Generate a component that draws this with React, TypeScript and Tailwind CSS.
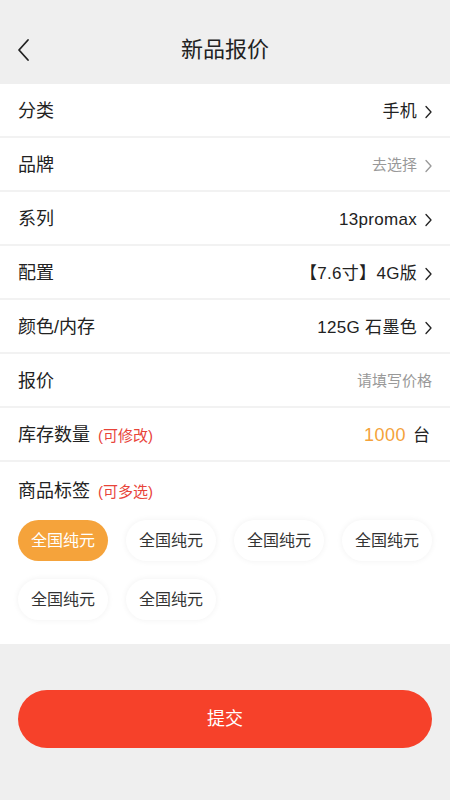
import React, { useState } from 'react';

const FONT = { fontFamily: '"Liberation Sans", "Noto Sans CJK SC", sans-serif' };

const Chevron = ({ className = '' }: { className?: string }) => (
  <svg width="7" height="14" viewBox="0 0 7 14" fill="none" className={className}>
    <path d="M1 1.5L6 7L1 12.5" stroke="currentColor" strokeWidth="1.3" strokeLinecap="round" strokeLinejoin="round" />
  </svg>
);

type Row = { label: string; value: string; muted?: boolean; arrow?: boolean };

const rows: Row[] = [
  { label: '分类', value: '手机', arrow: true },
  { label: '品牌', value: '去选择', muted: true, arrow: true },
  { label: '系列', value: '13promax', arrow: true },
  { label: '配置', value: '【7.6寸】4G版', arrow: true },
  { label: '颜色/内存', value: '125G 石墨色', arrow: true },
  { label: '报价', value: '请填写价格', muted: true },
];

export default function App() {
  const [selected, setSelected] = useState<number[]>([0]);
  const tags = Array.from({ length: 6 }, () => '全国纯元');

  const toggle = (i: number) =>
    setSelected((s) => (s.includes(i) ? s.filter((x) => x !== i) : [...s, i]));

  return (
    <div className="w-[450px] h-[800px] bg-[#efefef] flex flex-col text-[#222]" style={FONT}>
      {/* header */}
      <div className="h-[84px] flex items-end pb-[19px] relative shrink-0">
        <button className="absolute left-[16px] bottom-[22px] text-[#222]">
          <svg width="16" height="24" viewBox="0 0 16 24" fill="none">
            <path d="M12 2L3 12L12 22" stroke="currentColor" strokeWidth="1.8" strokeLinecap="round" strokeLinejoin="round" />
          </svg>
        </button>
        <div className="w-full text-center text-[22px] leading-[30px]">新品报价</div>
      </div>

      {/* list */}
      <div className="bg-white">
        {rows.map((r) => (
          <div key={r.label} className="h-[54px] pt-[3px] px-[18px] flex items-center justify-between border-b-2 border-[#f2f2f2]">
            <span className="text-[18px]">{r.label}</span>
            <span className="flex items-center gap-[8px]">
              <span className={r.muted ? 'text-[15px] text-[#999]' : 'text-[17px] tracking-[0.3px] text-[#222]'}>{r.value}</span>
              {r.arrow && <Chevron className={r.muted ? 'text-[#999]' : 'text-[#222]'} />}
            </span>
          </div>
        ))}
        <div className="h-[54px] pt-[3px] px-[18px] flex items-center justify-between border-b-2 border-[#f2f2f2]">
          <span className="flex items-baseline">
            <span className="text-[18px]">库存数量</span>
            <span className="text-[15px] text-[#e8443a] ml-[8px]">(可修改)</span>
          </span>
          <span className="flex items-baseline gap-[7px] pr-[2px]">
            <span className="text-[18px] tracking-[0.5px] text-[#f4a23a]">1000</span>
            <span className="text-[17px]">台</span>
          </span>
        </div>

        {/* tags */}
        <div className="h-[182px] px-[18px] pt-[16px]">
          <div className="flex items-baseline">
            <span className="text-[18px]">商品标签</span>
            <span className="text-[15px] text-[#e8443a] ml-[8px]">(可多选)</span>
          </div>
          <div className="grid grid-cols-4 gap-[18px] mt-[15px]">
            {tags.map((t, i) => {
              const on = selected.includes(i);
              return (
                <button
                  key={i}
                  onClick={() => toggle(i)}
                  className={
                    on
                      ? 'h-[41px] rounded-full bg-[#f5a33b] text-white text-[16px]'
                      : 'h-[41px] rounded-full bg-white text-[#333] text-[16px] shadow-[0_0_6px_rgba(0,0,0,0.06)]'
                  }
                >
                  {t}
                </button>
              );
            })}
          </div>
        </div>
      </div>

      {/* submit */}
      <div className="px-[18px] pt-[46px]">
        <button className="w-full h-[58px] rounded-full bg-[#f6412a] text-white text-[18px]">提交</button>
      </div>
    </div>
  );
}
